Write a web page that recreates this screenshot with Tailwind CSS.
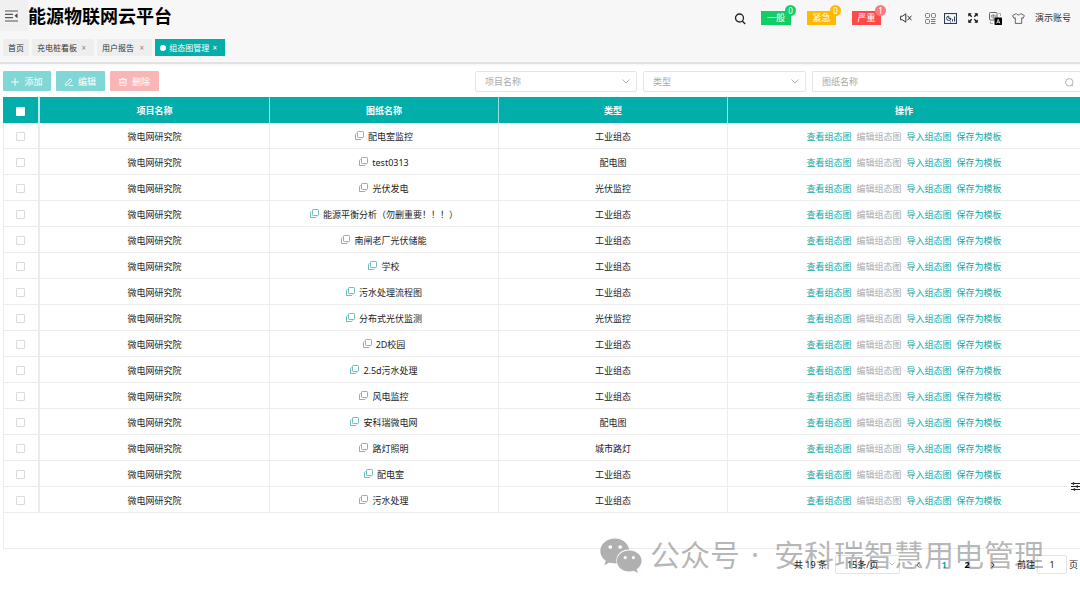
<!DOCTYPE html>
<html lang="zh-CN">
<head>
<meta charset="utf-8">
<meta name="viewport" content="width=device-width, initial-scale=1">
<title>能源物联网云平台</title>
<script src="https://cdn.jsdelivr.net/npm/@tailwindcss/browser@4"></script>
</head>
<body class="relative min-h-screen overflow-x-hidden bg-white font-['Noto_Sans','Noto_Sans_CJK_SC',sans-serif] text-[9px] leading-4 text-[#222]">

<header class="border-b-2 border-[#e2e2e2] bg-[#f7f7f7] shadow-xs">
  <div class="flex h-9 items-start">
    <button type="button" aria-label="折叠菜单" class="flex h-[31px] w-7 items-center justify-center bg-[#f0f0f0] pr-1.5">
      <svg class="h-3 w-[13px]" viewBox="0 0 13 12" fill="none" stroke="#555" stroke-width="1.2"><path d="M0 1h13M0 4.3h8M0 7.6h8M0 11h13"/><path d="M12.5 3.3v5L9.5 5.8z" fill="#444" stroke="none"/></svg>
    </button>
    <h1 class="text-lg leading-8 font-bold text-black">能源物联网云平台</h1>
    <div class="ml-auto flex h-9 items-center pr-[9px]">
      <button type="button" aria-label="搜索" class="mr-[15px] pt-0.5"><svg class="size-3" viewBox="0 0 12 12" fill="none" stroke="#222" stroke-width="1.3"><circle cx="5.500" cy="5" r="4"/><path d="M8.300 8l2.900 3"/></svg></button>
      <button type="button" class="relative mr-4 h-3.5 w-[30px] bg-[#13ce66] text-center leading-[14px] text-white">一般<span class="absolute -top-1.5 -right-[5px] size-[11px] rounded-full bg-[#13ce66] text-[8px] leading-[11px]">0</span></button>
      <button type="button" class="relative mr-4 h-3.5 w-[29px] bg-[#ffba00] text-center leading-[14px] text-white">紧急<span class="absolute -top-1.5 -right-[5px] size-[11px] rounded-full bg-[#ffba00] text-[8px] leading-[11px]">0</span></button>
      <button type="button" class="relative mr-[19px] h-3.5 w-[29px] bg-[#ff4949] text-center leading-[14px] text-white">严重<span class="absolute -top-1.5 -right-[5px] size-[11px] rounded-full bg-[#fb7b7b] text-[8px] leading-[11px]">1</span></button>
      <button type="button" aria-label="静音" class="mr-[13px]"><svg class="h-2.5 w-3" viewBox="0 0 12 10" fill="none" stroke="#333"><path d="M.6 3.2h1.900L5.800.8v8.400L2.500 6.800H.6zM7.500 2.700l4 4.600M11.500 2.700l-4 4.600"/></svg></button>
      <button type="button" aria-label="应用" class="mr-2"><svg class="h-[11px] w-[11px]" viewBox="0 0 11 11" fill="none" stroke="#777"><rect x=".5" y=".5" width="4" height="4" rx="1"/><rect x="6.500" y=".5" width="4" height="4" rx="1"/><rect x=".5" y="6.500" width="4" height="4" rx="1"/><path d="M6 6.500h4.500M6 8.500h4.500M6 10.500h4.500"/></svg></button>
      <button type="button" aria-label="大屏" class="mr-[11px]"><svg class="h-[11px] w-[13px]" viewBox="0 0 13 11" fill="none" stroke="#2c3e55"><rect x=".5" y=".5" width="12" height="10" stroke-width="1.100"/><path d="M4.800 3.100a2.200 2.200 0 1 0 2.200 2.300H4.800zM8.500 8.500V6.200M10.500 8.500V3.500M6 9h1"/></svg></button>
      <button type="button" aria-label="全屏" class="mr-[11px]"><svg class="h-2.5 w-2.5" viewBox="0 0 10 10" fill="#111" stroke="#111" stroke-width="1.300"><path d="M1 1l2.700 2.700M9 1L6.300 3.700M1 9l2.700-2.700M9 9L6.300 6.300"/><path d="M.3 .3h3.400l-3.400 3.400zM9.700 .3v3.400l-3.400-3.400zM.3 9.700v-3.400l3.400 3.400zM9.700 9.700h-3.400l3.400-3.400z" stroke="none"/></svg></button>
      <button type="button" aria-label="切换语言" class="mr-2.5"><svg class="h-[13px] w-[13px]" viewBox="0 0 13 13" fill="none"><rect x=".5" y=".5" width="7.500" height="7.500" rx=".8" stroke="#666"/><path d="M2.300 3.300h4v1.800h-4zM4.300 2v5" stroke="#777" stroke-width=".7"/><rect x="5.500" y="5.500" width="7.500" height="7.500" rx=".8" fill="#000"/><path d="M7.600 11.400l1.650-4 1.650 4M8.100 10.200h2.300" stroke="#fff" stroke-width=".8"/><path d="M1.500 9.500v2h2.500M9.500 1.500h2v2.500" stroke="#888" stroke-width=".7"/></svg></button>
      <button type="button" aria-label="主题" class="mr-2.5"><svg class="h-[11px] w-[13px]" viewBox="0 0 13 11" fill="none" stroke="#555" stroke-width=".9" stroke-linejoin="round"><path d="M4.300 .6L.6 2.600l1.300 2.700 1.400-.5v5.600h6.400V4.800l1.400.5 1.300-2.700L8.700 .6C8.200 2.400 4.800 2.400 4.300 .6z"/></svg></button>
      <button type="button" class="text-[#333]">演示账号</button>
    </div>
  </div>
  <nav aria-label="已打开页面" class="flex gap-[3px] px-[3px] pt-[3px] pb-1.5 text-[8px] leading-[17px] text-[#333]">
    <a href="#" class="w-[26px] bg-[#eee] text-center">首页</a>
    <a href="#" class="flex w-[62px] justify-between bg-[#eee] pr-2 pl-[5px]">充电桩看板<span class="text-[#888]">×</span></a>
    <a href="#" class="flex w-[55px] justify-between bg-[#eee] pr-2 pl-[5px]">用户报告<span class="text-[#888]">×</span></a>
    <a href="#" aria-current="page" class="flex w-[70px] items-center justify-between bg-[#02aeaa] pr-2 pl-[5px] text-white"><span class="size-1.5 rounded-full bg-white"></span>组态图管理<span>×</span></a>
  </nav>
</header>

<main class="pt-[7px] pl-[3px]">
  <div class="flex h-[26px] items-start">
    <div class="flex gap-[5px] leading-5 text-white">
      <button type="button" disabled class="flex h-5 w-12 items-center justify-center gap-[5px] rounded-[1px] bg-[#81d7d5] pt-px"><svg class="size-2" viewBox="0 0 8 8" stroke="#fff" stroke-width=".9"><path d="M4 0v8M0 4h8"/></svg>添加</button>
      <button type="button" disabled class="flex h-5 w-[49px] items-center justify-center gap-[5px] rounded-[1px] bg-[#81d7d5] pt-px"><svg class="size-2" viewBox="0 0 8 8" fill="none" stroke="#fff" stroke-width=".9"><path d="M.8 5.500L5 .8l1.800 1.600L2.700 7 .6 7.400zM4 7.500h4"/></svg>编辑</button>
      <button type="button" disabled class="flex h-5 w-[49px] items-center justify-center gap-[5px] rounded-[1px] bg-[#fab6b6] pt-px"><svg class="size-2" viewBox="0 0 8 8" fill="none" stroke="#fff" stroke-width=".9"><path d="M0 1.600h8M2.600 1.500V.4h2.800v1.100M1 1.600v6h6v-6M3.100 3.200v2.800M4.900 3.200v2.800"/></svg>删除</button>
    </div>
    <div class="ml-auto flex w-[605px] gap-1.5 text-[#aaa]">
      <div class="relative w-[162px]">
        <select aria-label="项目名称" class="block h-[21px] w-full appearance-none rounded-xs border border-[#e4e4e4] bg-white pl-[9px]"><option>项目名称</option></select>
        <svg class="pointer-events-none absolute top-2 right-[7px] h-[5px] w-2" viewBox="0 0 8 5" fill="none" stroke="#b5b5b5"><path d="M.5 .5L4 4 7.500 .5"/></svg>
      </div>
      <div class="relative w-[163px]">
        <select aria-label="类型" class="block h-[21px] w-full appearance-none rounded-xs border border-[#e4e4e4] bg-white pl-[9px]"><option>类型</option></select>
        <svg class="pointer-events-none absolute top-2 right-[7px] h-[5px] w-2" viewBox="0 0 8 5" fill="none" stroke="#b5b5b5"><path d="M.5 .5L4 4 7.500 .5"/></svg>
      </div>
      <div class="relative flex-1">
        <input type="text" aria-label="图纸名称" placeholder="图纸名称" class="block h-[21px] w-full rounded-l-xs border border-r-0 border-[#e4e4e4] bg-white pl-[9px] placeholder:text-[#aaa]">
        <svg class="pointer-events-none absolute top-[7px] right-1.5 size-[9px]" viewBox="0 0 9 9" fill="none" stroke="#aaa" stroke-width=".9"><circle cx="4.300" cy="4.300" r="3.700"/><path d="M6.500 6.800l1.800 1.700"/></svg>
      </div>
    </div>
  </div>

  <div class="border-b border-[#ececec] pb-[35px] shadow-[inset_1px_0_0_#ececec]">
    <table class="w-full table-fixed border-separate border-spacing-0 text-center">
      <colgroup><col class="w-[37px]"><col class="w-[230px]"><col class="w-[229px]"><col class="w-[229px]"><col></colgroup>
      <thead>
        <tr class="bg-[#02aeaa] text-white">
          <th class="h-[26px] border-r-2 border-[#c5e9e8] p-0 pt-0.5"><input type="checkbox" aria-label="全选" class="mx-auto block size-[9px] appearance-none rounded-[1px] bg-white"></th>
          <th class="border-r border-[#9edddb] p-0 pt-0.5 font-bold">项目名称</th>
          <th class="border-r border-[#9edddb] p-0 pt-0.5 font-bold">图纸名称</th>
          <th class="border-r border-[#9edddb] p-0 pt-0.5 font-bold">类型</th>
          <th class="p-0 pt-0.5 font-bold">操作</th>
        </tr>
      </thead>
      <tbody id="rows"></tbody>
    </table>
  </div>

  <div class="flex items-center justify-end pt-1.5 pr-0.5">
    <span class="mr-2">共 19 条</span>
    <div class="relative mr-4 w-[65px]">
      <select aria-label="每页条数" class="block h-[19px] w-full appearance-none rounded-xs border border-[#e4e4e4] pl-[11px]"><option>15条/页</option></select>
      <svg class="pointer-events-none absolute top-[7px] right-[5px] h-1 w-1.5" viewBox="0 0 6 4" fill="none" stroke="#b5b5b5"><path d="M.5 .5L3 3 5.500 .5"/></svg>
    </div>
    <button type="button" aria-label="上一页" class="mr-[21px]"><svg class="h-1.5 w-1" viewBox="0 0 4 6" fill="none" stroke="#555"><path d="M3.300 .4L.8 3l2.500 2.600"/></svg></button>
    <button type="button" aria-current="page" class="mr-[17px] w-1.5 font-bold text-[#02aeaa]">1</button>
    <button type="button" class="mr-[21px] w-1.5 font-bold text-black">2</button>
    <button type="button" aria-label="下一页" class="mr-[22px]"><svg class="h-1.5 w-1" viewBox="0 0 4 6" fill="none" stroke="#222"><path d="M.7 .4L3.200 3 .7 5.600"/></svg></button>
    <label for="page" class="mr-0.5">前往</label>
    <input id="page" type="text" value="1" class="mr-0.5 h-[19px] w-[30px] rounded-xs border border-[#e4e4e4] text-center">
    <span>页</span>
  </div>
</main>

<button type="button" aria-label="列设置" class="absolute top-[478px] right-0 flex h-4 w-[13px] items-center justify-end bg-white">
  <svg class="h-[9px] w-[9px]" viewBox="0 0 9 9" fill="none" stroke="#222"><path d="M0 1.500h9M0 4.500h9M0 7.500h9"/><path d="M2.500 .2v2.600M6.300 3.200v2.600M3.500 6.200v2.600" stroke-width="1.400"/></svg>
</button>

<div class="pointer-events-none absolute top-[535px] right-[36px] flex h-10 items-center text-[30px] leading-10 whitespace-nowrap text-black/30">
  <svg class="mr-2 h-[35px] w-[42px]" viewBox="0 0 42 35" fill="#b0b0b0"><path fill-rule="evenodd" d="M15 .5C6.800 .5 .3 6 .3 13c0 4 2 7.300 5.400 9.700L4.300 27.200l5.200-2.700c1.900.6 3.600.9 5.800.9 1 0 1.200 0 1.500-.1C14.700 17.800 21 11.500 29.300 11.600 28 5 22 .5 15 .5zM10.300 7.200a1.900 1.900 0 1 1 0 3.800 1.900 1.900 0 0 1 0-3.800zM20.200 7.200a1.900 1.900 0 1 1 0 3.800 1.900 1.900 0 0 1 0-3.800z"/><path fill-rule="evenodd" d="M29.300 12.600c-7 0-12.300 4.700-12.300 10.400 0 5.900 5.300 10.500 12.300 10.500 1.500 0 3-.4 4.400-.7l4.200 2.100-1.200-3.700c3-2.200 4.900-5 4.900-8.200 0-5.700-5.700-10.400-12.300-10.400zM25.200 18a1.600 1.600 0 1 1 0 3.200 1.600 1.600 0 0 1 0-3.200zM33.400 18a1.600 1.600 0 1 1 0 3.200 1.600 1.600 0 0 1 0-3.200z"/></svg>
  <span>公众号</span><span class="mr-1 w-[30px] text-center">·</span><span>安科瑞智慧用电管理</span>
</div>

<template id="row">
  <tr>
    <td class="h-[26px] border-r-2 border-b border-[#ececec] p-0 pt-0.5"><input type="checkbox" aria-label="选择" class="mx-auto block size-[9px] appearance-none rounded-[1px] border border-[#dadada] bg-white"></td>
    <td class="border-r border-b border-[#ececec] p-0 pt-0.5">微电网研究院</td>
    <td class="border-r border-b border-[#ececec] p-0 pt-0.5"><div class="flex items-center justify-center gap-1"><svg class="mb-0.5 h-[9px] w-[9px]" viewBox="0 0 9 9" fill="none" stroke="#5cb8b6" stroke-width=".9"><rect x="2.500" y=".5" width="6" height="6" rx=".8"/><path d="M1.500 2.300L.5 3.300v5.200h5.300l1-1"/></svg><span data-name></span></div></td>
    <td data-type class="border-r border-b border-[#ececec] p-0 pt-0.5"></td>
    <td class="border-b border-[#ececec] p-0 pt-0.5"><div class="flex justify-center gap-[5px] text-[#13a8a4]"><a href="#">查看组态图</a><a href="#" aria-disabled="true" class="text-[#aaa]">编辑组态图</a><a href="#">导入组态图</a><a href="#">保存为模板</a></div></td>
  </tr>
</template>
<script>
  const drawings = [
    ['配电室监控', '工业组态'], ['test0313', '配电图'], ['光伏发电', '光伏监控'],
    ['能源平衡分析（勿删重要！！！）', '工业组态'], ['南闸老厂光伏储能', '工业组态'], ['学校', '工业组态'],
    ['污水处理流程图', '工业组态'], ['分布式光伏监测', '光伏监控'], ['2D校园', '工业组态'],
    ['2.5d污水处理', '工业组态'], ['风电监控', '工业组态'], ['安科瑞微电网', '配电图'],
    ['路灯照明', '城市路灯'], ['配电室', '工业组态'], ['污水处理', '工业组态']
  ];
  const body = document.getElementById('rows');
  for (const [name, type] of drawings) {
    const row = document.getElementById('row').content.cloneNode(true);
    row.querySelector('[data-name]').textContent = name;
    row.querySelector('[data-type]').textContent = type;
    row.querySelector('input').setAttribute('aria-label', '选择 ' + name);
    body.append(row);
  }
</script>
</body>
</html>
